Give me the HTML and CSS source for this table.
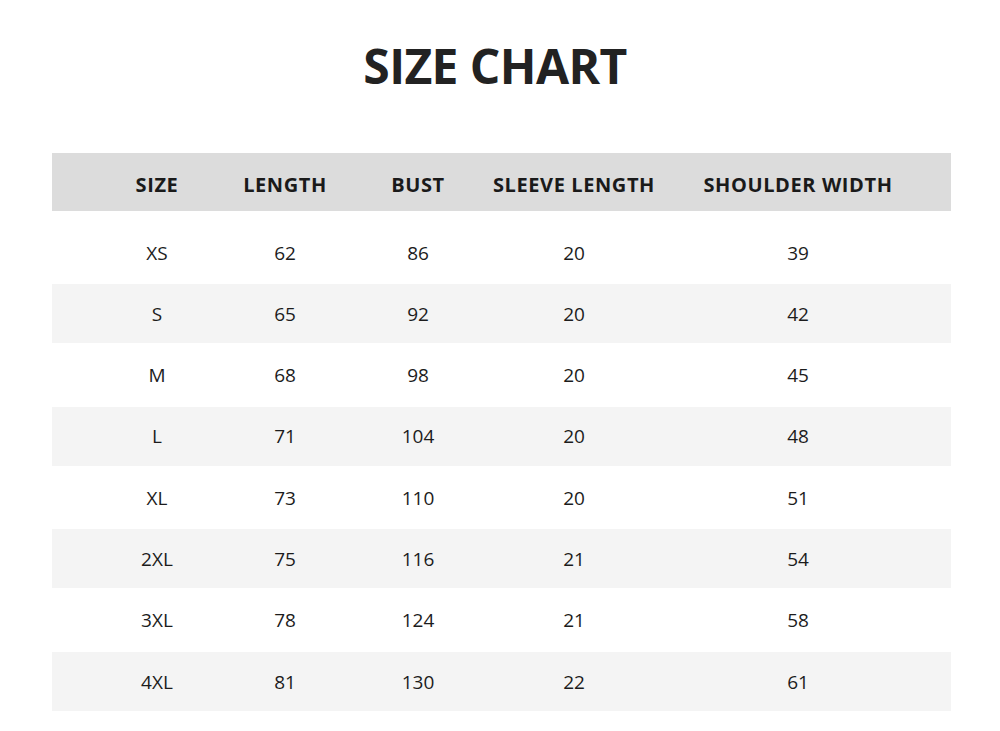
FILE: index.html
```html
<!DOCTYPE html>
<html lang="en">
<head>
<meta charset="utf-8">
<title>Size Chart</title>
<link rel="stylesheet" href="styles.css">
</head>
<body>
<main class="page">
  <h1 class="title">SIZE CHART</h1>
  <div class="chart">
    <div class="row head">
      <div>SIZE</div><div>LENGTH</div><div>BUST</div><div>SLEEVE LENGTH</div><div>SHOULDER WIDTH</div>
    </div>
    <div class="body">
      <div class="row"><div>XS</div><div>62</div><div>86</div><div>20</div><div>39</div></div>
      <div class="row alt"><div>S</div><div>65</div><div>92</div><div>20</div><div>42</div></div>
      <div class="row"><div>M</div><div>68</div><div>98</div><div>20</div><div>45</div></div>
      <div class="row alt"><div>L</div><div>71</div><div>104</div><div>20</div><div>48</div></div>
      <div class="row"><div>XL</div><div>73</div><div>110</div><div>20</div><div>51</div></div>
      <div class="row alt"><div>2XL</div><div>75</div><div>116</div><div>21</div><div>54</div></div>
      <div class="row"><div>3XL</div><div>78</div><div>124</div><div>21</div><div>58</div></div>
      <div class="row alt"><div>4XL</div><div>81</div><div>130</div><div>22</div><div>61</div></div>
    </div>
  </div>
</main>
</body>
</html>
```
FILE: styles.css
```css
html, body {
  margin: 0;
  padding: 0;
  background: #ffffff;
}
body {
  font-family: "Open Sans", "Noto Sans", sans-serif;
  color: #1c1c1c;
}
.page {
  width: 1000px;
  height: 731px;
  overflow: hidden;
  padding-top: 36px;
  box-sizing: border-box;
}
.title {
  margin: 0;
  text-align: center;
  font-size: 48px;
  line-height: 60px;
  font-weight: 700;
  letter-spacing: -0.6px;
  color: #222;
  padding-right: 10px;
}
.chart {
  margin: 57px 49px 0 52px;
}
.row {
  display: grid;
  grid-template-columns: 128px 128px 138px 174px 274px;
  padding-left: 41px;
  height: 61.3px;
  align-items: center;
  text-align: center;
  font-size: 19px;
}
.head {
  height: 58px;
  box-sizing: border-box;
  padding-top: 4px;
  background: #dcdcdc;
  font-weight: 700;
  font-size: 20px;
  letter-spacing: 0.6px;
  color: #1a1a1a;
}
.body {
  padding-top: 11px;
}
.alt {
  background: #f4f4f4;
  height: 59px;
  margin: 1px 0 1.3px;
}
```
